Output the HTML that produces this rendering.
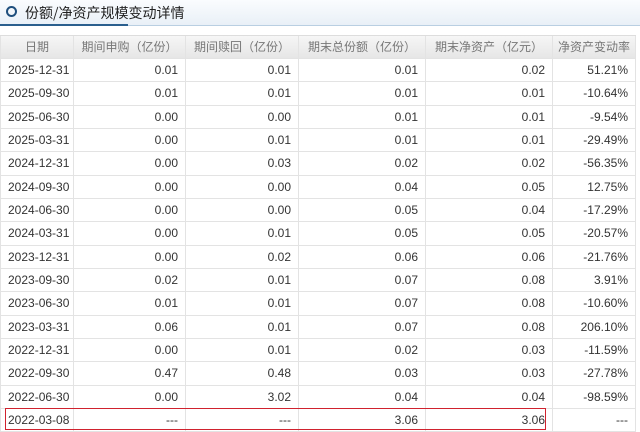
<!DOCTYPE html>
<html><head><meta charset="utf-8"><style>
body{margin:0;width:640px;height:430px;overflow:hidden;background:#fff;font-family:"Liberation Sans","Noto Sans CJK SC",sans-serif;position:relative}
.hd{position:absolute;left:0;top:0;width:640px;height:25px;background:linear-gradient(#fafcfe,#e9f0f7)}
.hd .c{position:absolute;left:6px;top:6px;width:7px;height:7px;border:2px solid #1f4f7d;border-radius:50%}
.hd .t{position:absolute;left:25px;top:3px;font-size:14px;color:#222;font-family:"Noto Sans CJK SC",sans-serif}
.ul{position:absolute;top:24px;height:2px;left:0;width:128px;background:#2a5f8e}
.ul2{position:absolute;top:25px;height:1px;left:128px;width:512px;background:#b9cfe2}
.r{position:absolute;left:0;width:636px;height:23.33px;border-bottom:1px solid #e3e3e3;box-sizing:border-box}
.r div{position:absolute;top:0;height:100%;line-height:22px;font-size:12px;color:#333;text-align:right;border-right:1px solid #e3e3e3;box-sizing:border-box;padding-right:7px;white-space:nowrap;overflow:hidden}
.h{background:linear-gradient(#f6f6f6,#e6e6e6);border-top:1px solid #ddd}
.h div{text-align:center;padding:0;color:#777;font-family:"Noto Sans CJK SC",sans-serif;line-height:22px}
.r div.d{text-align:left;padding:0 0 0 7px}
.h div.d{text-align:center;padding:0}
.a{left:0;width:74px;border-left:1px solid #e3e3e3}.b{left:74px;width:112px}.e{left:186px;width:113px}.f{left:299px;width:127px}.g{left:426px;width:127px}.k{left:553px;width:83px}
.red{position:absolute;left:5px;top:408px;width:541px;height:22px;border:1px solid #d0222e;box-sizing:border-box}
</style></head><body>
<div class="hd"><div class="c"></div><div class="t">份额/净资产规模变动详情</div></div>
<div class="ul"></div><div class="ul2"></div>
<div class="r h" style="top:35px;height:24px"><div class="a d">日期</div><div class="b">期间申购（亿份）</div><div class="e">期间赎回（亿份）</div><div class="f">期末总份额（亿份）</div><div class="g">期末净资产（亿元）</div><div class="k">净资产变动率</div></div>
<div id="rows"></div>
<script>
var d=[["2025-12-31","0.01","0.01","0.01","0.02","51.21%"],["2025-09-30","0.01","0.01","0.01","0.01","-10.64%"],["2025-06-30","0.00","0.00","0.01","0.01","-9.54%"],["2025-03-31","0.00","0.01","0.01","0.01","-29.49%"],["2024-12-31","0.00","0.03","0.02","0.02","-56.35%"],["2024-09-30","0.00","0.00","0.04","0.05","12.75%"],["2024-06-30","0.00","0.00","0.05","0.04","-17.29%"],["2024-03-31","0.00","0.01","0.05","0.05","-20.57%"],["2023-12-31","0.00","0.02","0.06","0.06","-21.76%"],["2023-09-30","0.02","0.01","0.07","0.08","3.91%"],["2023-06-30","0.01","0.01","0.07","0.08","-10.60%"],["2023-03-31","0.06","0.01","0.07","0.08","206.10%"],["2022-12-31","0.00","0.01","0.02","0.03","-11.59%"],["2022-09-30","0.47","0.48","0.03","0.03","-27.78%"],["2022-06-30","0.00","3.02","0.04","0.04","-98.59%"],["2022-03-08","---","---","3.06","3.06","---"]];
var c=["a d","b","e","f","g","k"],h="";
d.forEach(function(r,i){h+='<div class="r" style="top:'+(59+i*23.33)+'px">';r.forEach(function(v,j){h+='<div class="'+c[j]+'">'+v+'</div>'});h+='</div>'});
document.getElementById('rows').innerHTML=h;
</script>
<div class="red"></div>
</body></html>
